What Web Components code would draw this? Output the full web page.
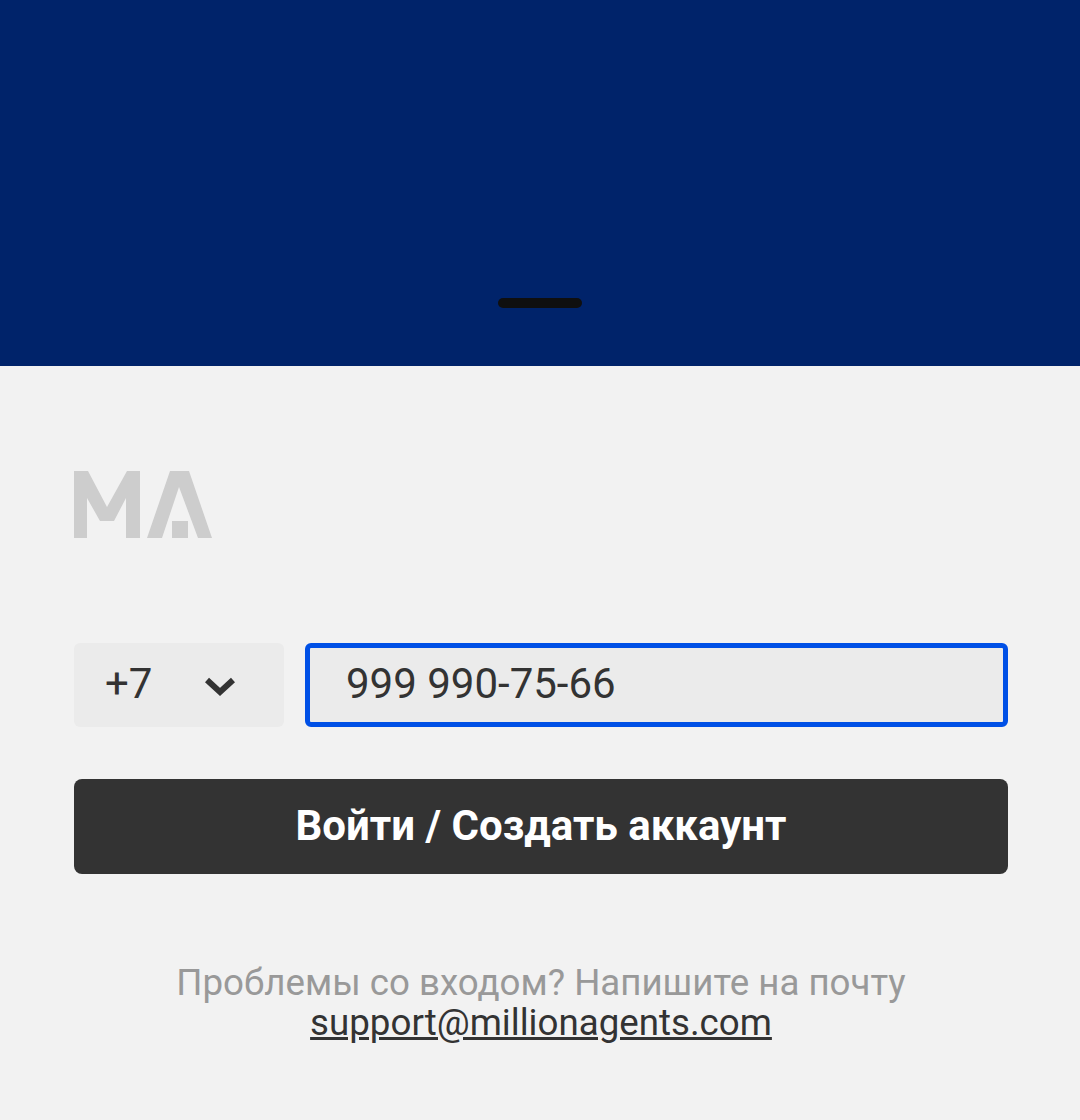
<!DOCTYPE html>
<html lang="ru">
<head>
<meta charset="utf-8">
<title>Million Agents</title>
<style>
  html, body {
    margin: 0;
    padding: 0;
    background: #f2f2f2;
  }

  body {
    font-family: Roboto, "Liberation Sans", sans-serif;
    color: #333;
  }
</style>
</head>
<body>
<ma-header></ma-header>
<ma-login>
  <ma-logo slot="logo"></ma-logo>
  <ma-code slot="code">+7</ma-code>
  <ma-phone slot="phone">999 990-75-66</ma-phone>
  <ma-button slot="submit">Войти / Создать аккаунт</ma-button>
  <ma-support slot="support" email="support@millionagents.com">Проблемы со входом? Напишите на почту</ma-support>
</ma-login>

<script>
const define = (name, html) => {
  const template = document.createElement('template');
  template.innerHTML = html;

  customElements.define(name, class extends HTMLElement {
    constructor() {
      super();
      this.attachShadow({mode: 'open'});
      this.shadowRoot.appendChild(template.content.cloneNode(true));
    }
  });
};

define('ma-header', `
  <style>
    :host {
      display: flex;
      height: 366px;
      background: #00236a;
      justify-content: center;
      align-items: flex-end;
    }

    div {
      width: 84px;
      height: 10px;
      margin-bottom: 58px;
      border-radius: 5px;
      background: #0f0f0f;
    }
  </style>
  <div></div>
`);

define('ma-logo', `
  <style>
    :host {
      display: block;
      height: 67px;
    }

    svg {
      display: block;
    }
  </style>
  <svg width="138" height="67" viewBox="0 0 138 67" fill="#cdcdcd">
    <path d="M0 0H14L33 36L53 0H66V67H52V27L40 50H26L13 27V67H0Z"/>
    <path d="M73 67L96 0H115L138 67H124L105 16L88 67Z"/>
    <path d="M98 50H114V67H98Z"/>
  </svg>
`);

define('ma-code', `
  <style>
    :host {
      display: flex;
      box-sizing: border-box;
      width: 209.5px;
      height: 84px;
      padding: 0 48.5px 0 31px;
      align-items: center;
      justify-content: space-between;
      border-radius: 6px;
      background: #ebebeb;
      color: #333;
      font-size: 42px;
    }

    span {
      position: relative;
      top: -2px;
    }

    svg {
      display: block;
      margin-top: 3px;
    }
  </style>
  <span><slot></slot></span>
  <svg width="30" height="20" viewBox="0 0 30 20" fill="none" stroke="#333" stroke-width="6">
    <path d="M2 3L15 15L28 3"/>
  </svg>
`);

define('ma-phone', `
  <style>
    :host {
      display: flex;
      box-sizing: border-box;
      flex: 1;
      height: 84px;
      padding: 0 0 4px 36px;
      align-items: center;
      border: 5px solid #0050e6;
      border-radius: 6px;
      background: #ebebeb;
      color: #333;
      font-size: 42px;
    }
  </style>
  <slot></slot>
`);

define('ma-button', `
  <style>
    :host {
      display: flex;
      box-sizing: border-box;
      height: 95px;
      padding-bottom: 2px;
      align-items: center;
      justify-content: center;
      border-radius: 8px;
      background: #333;
      color: #fff;
      font-size: 42px;
      font-weight: 700;
    }
  </style>
  <slot></slot>
`);

class MaSupport extends HTMLElement {
  constructor() {
    super();
    this.attachShadow({mode: 'open'});
    this.shadowRoot.innerHTML = `
      <style>
        :host {
          display: block;
          color: #999;
          font-size: 36.7px;
          line-height: 40px;
          text-align: center;
        }

        a {
          display: block;
          color: #333;
          text-decoration: underline;
        }
      </style>
      <slot></slot>
      <a></a>
    `;
  }

  connectedCallback() {
    this.shadowRoot.querySelector('a').textContent = this.getAttribute('email');
  }
}

customElements.define('ma-support', MaSupport);

define('ma-login', `
  <style>
    :host {
      display: block;
      padding: 105px 72px 0 74px;
    }

    .row {
      display: flex;
      gap: 21.5px;
      margin-top: 105px;
    }

    .submit {
      margin-top: 52px;
    }

    .support {
      margin-top: 89px;
    }
  </style>
  <slot name="logo"></slot>
  <div class="row">
    <slot name="code"></slot>
    <slot name="phone"></slot>
  </div>
  <div class="submit"><slot name="submit"></slot></div>
  <div class="support"><slot name="support"></slot></div>
`);
</script>
</body>
</html>
